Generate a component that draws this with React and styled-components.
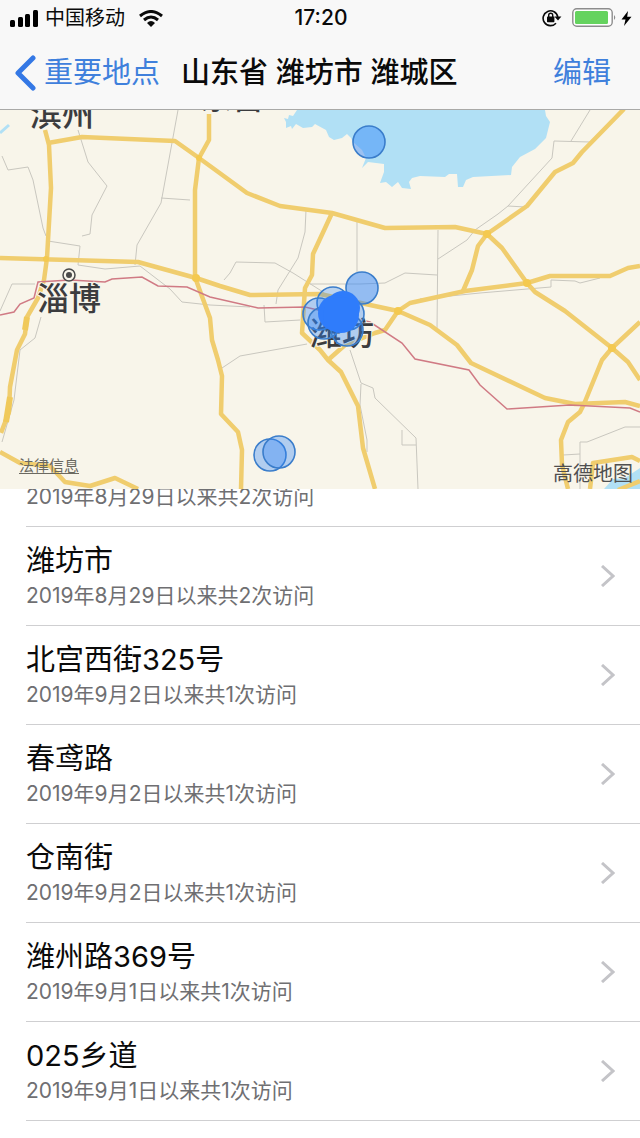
import React from 'react';
import styled, { createGlobalStyle } from 'styled-components';

const GlobalStyle = createGlobalStyle`
  * {
    box-sizing: border-box;
  }

  body {
    margin: 0;
    background-color: #ffffff;
    color: #0a0a0a;
    font-family: Inter, "Noto Sans CJK SC", sans-serif;
  }
`

const Page = styled.div`
  display: flex;
  flex-direction: column;
  min-height: 100vh;
`

const Header = styled.header`
  background-color: #f8f8f8;
  border-bottom: 1px solid #a9a9a7;
`

const StatusBar = styled.div`
  display: grid;
  grid-template-columns: 1fr auto 1fr;
  align-items: center;
  height: 36px;
  padding: 0 8px 0 10px;
`

const StatusGroup = styled.div`
  display: flex;
  align-items: center;
  justify-content: ${props => props.$end ? 'flex-end' : 'flex-start'};
  gap: ${props => props.$gap};
`

const Carrier = styled.span`
  font-size: 20px;
  line-height: 28px;
  margin: 0 8px 0 0;
`

const Clock = styled.time`
  font-size: 21px;
  font-weight: 500;
  line-height: 28px;
`

const NavBar = styled.nav`
  display: flex;
  align-items: center;
  height: 73px;
  padding: 0 29px 0 14px;
`

const NavButton = styled.button`
  display: flex;
  align-items: center;
  gap: 8px;
  padding: 0;
  border: 0;
  background: none;
  color: #3f80dc;
  font-family: inherit;
  font-size: 29px;
  line-height: 40px;
`

const Title = styled.h1`
  flex: 1;
  margin: 0 0 0 21px;
  font-size: 29px;
  font-weight: 500;
  line-height: 40px;
`

const MapArea = styled.section`
  position: relative;
  height: 379px;
  overflow: hidden;
  background-color: #f8f5ea;
`

const MapDrawing = styled.svg`
  display: block;
  width: 100%;
  height: 100%;

  text {
    font-family: "Noto Sans CJK SC", sans-serif;
    font-size: 32px;
    font-weight: 500;
    fill: #3c3c3e;
    stroke: #f8f5ea;
    stroke-width: 2px;
    paint-order: stroke;
  }
`

const LegalLink = styled.a`
  position: absolute;
  left: 19px;
  bottom: 12px;
  color: #6b6960;
  font-size: 15px;
  line-height: 22px;
  text-underline-offset: 2px;
`

const MapBrand = styled.span`
  position: absolute;
  right: 7px;
  bottom: 1px;
  color: #4f4f50;
  font-size: 20px;
  line-height: 28px;
`

const PlaceList = styled.ul`
  margin: 0;
  padding: 0 0 17px 26px;
  list-style: none;
`

const PlaceRow = styled.li`
  display: flex;
  align-items: flex-end;
  height: ${props => props.$scrolled ? '38px' : '99px'};
  overflow: hidden;
  border-bottom: 1px solid #cfcfd1;
`

const PlaceButton = styled.button`
  display: flex;
  align-items: center;
  justify-content: space-between;
  width: 100%;
  height: 98px;
  flex-shrink: 0;
  padding: 0 25px 0 0;
  border: 0;
  background: none;
  color: inherit;
  font-family: inherit;
  text-align: left;
`

const PlaceText = styled.span`
  display: flex;
  flex-direction: column;
`

const PlaceName = styled.span`
  font-size: 29px;
  line-height: 40px;
`

const PlaceVisits = styled.span`
  color: #6f6f72;
  font-size: 21px;
  line-height: 30px;
`

const places = [
  { name: '潍坊市', visits: '2019年8月29日以来共2次访问', scrolled: true },
  { name: '潍坊市', visits: '2019年8月29日以来共2次访问' },
  { name: '北宫西街325号', visits: '2019年9月2日以来共1次访问' },
  { name: '春鸢路', visits: '2019年9月2日以来共1次访问' },
  { name: '仓南街', visits: '2019年9月2日以来共1次访问' },
  { name: '潍州路369号', visits: '2019年9月1日以来共1次访问' },
  { name: '025乡道', visits: '2019年9月1日以来共1次访问' },
]

const minorRoads = [
  '2,156 8,170 28,167 33,180 43,228 46,236',
  '78,130 88,162 107,186 92,215 90,234 82,236',
  '178,110 161,203 137,245 135,265',
  '161,198 190,200',
  '48,241 80,246 78,265 105,269 140,266 170,289 182,302 210,305 250,307',
  '0,311 12,284 35,284',
  '41,317 35,338 20,350 14,400 2,442',
  '306,210 305,232 298,258 278,290 276,304',
  '224,280 230,273 236,262 275,263 293,273 320,290 340,305',
  '310,284 360,284 385,283 405,273 437,275',
  '357,222 357,272',
  '438,230 437,330',
  '438,259 467,240 475,230 498,214 508,206 552,158 554,141 590,142',
  '571,141 590,110',
  '508,206 525,207',
  '420,299 480,293 551,287 551,280 575,281 580,283 600,278',
  '264,305 265,322 300,320',
  '222,368 240,356 307,344',
  '350,350 361,383 373,388 375,398 416,438 418,489',
  '402,430 402,445 416,445',
  '361,384 360,405 367,440 367,452',
  '640,427 625,427 587,442 580,442 580,489',
  '563,455 580,454',
]

const mainRoads = [
  '45,130 49,145 51,188 47,258 44,280 38,298 27,317 25,334 17,350 10,387 9,412 1,433',
  '48,143 82,137 175,141 199,158 210,166 247,193 280,206 332,213 385,228 455,227 487,234 502,248 527,283 535,292 565,311 612,348 628,362 640,380',
  '209,114 209,140 199,158 195,190 195,277 200,291 210,318 212,340 218,360 222,376 221,414 238,432 242,450 241,489',
  '0,258 138,262 196,278 220,286 250,295 320,294 370,305 398,311 430,325 457,345 471,363 545,398 575,404 625,402 640,406',
  '332,213 313,254 312,275 305,288 302,333 320,350 328,360 341,372 358,406 363,448 375,489',
  '328,360 345,345 375,333 385,330 398,311 410,303 465,291 527,283 550,276 610,276 628,268 640,266',
  '463,291 472,270 478,246 487,234 527,206 555,172 573,163 582,152 624,109',
  '640,322 612,348 602,360 584,404 580,412 568,422 561,440 562,465 568,489',
  '0,452 20,463 50,466 65,482 90,486 115,478 138,489',
  '590,489 593,463 632,457 640,461',
  '618,490 640,481',
]

const visitDots = [
  { x: 369, y: 142, o: 0.45 },
  { x: 362, y: 288, o: 0.5 },
  { x: 333, y: 303, o: 0.3 },
  { x: 319, y: 314, o: 0.35 },
  { x: 324, y: 323, o: 0.35 },
  { x: 348, y: 314, o: 0.35 },
  { x: 347, y: 330, o: 0.35 },
  { x: 270, y: 455, o: 0.35 },
  { x: 279, y: 452, o: 0.35 },
]

function SignalIcon() {
  return (
    <svg width="29" height="17" viewBox="0 0 29 17">
      <rect x="0" y="10" width="5" height="7" rx="1.5" />
      <rect x="8" y="7" width="5" height="10" rx="1.5" />
      <rect x="15" y="4" width="5" height="13" rx="1.5" />
      <rect x="23" y="0" width="5" height="17" rx="1.5" />
    </svg>
  )
}

function WifiIcon() {
  return (
    <svg width="24" height="17" viewBox="0 0 24 17" fill="none" stroke="#0a0a0a" strokeWidth="3">
      <path d="M1 6 Q12 -3 23 6" />
      <path d="M5 10 Q12 4 19 10" />
      <path d="M8 13 Q12 9 16 13 L12 17 Z" fill="#0a0a0a" stroke="none" />
    </svg>
  )
}

function LockIcon() {
  return (
    <svg width="20" height="18" viewBox="0 0 20 18" fill="none" stroke="#0a0a0a" strokeWidth="1.6">
      <path d="M14 14.2 A7.4 7.4 0 1 1 15.8 8" />
      <path d="M12.4 7.5 L19.4 7.5 L16 11.5 Z" fill="#0a0a0a" stroke="none" />
      <rect x="5" y="7.6" width="7.4" height="5.6" rx="0.6" fill="#0a0a0a" stroke="none" />
      <path d="M6.7 8 V6.2 A2 2 0 0 1 10.7 6.2 V8" strokeWidth="1.4" />
    </svg>
  )
}

function BatteryIcon() {
  return (
    <svg width="45" height="20" viewBox="0 0 45 20">
      <rect x="0.8" y="0.8" width="39.4" height="17.4" rx="4" fill="#fff" stroke="#8c8c8c" strokeWidth="1.4" />
      <rect x="3" y="3" width="33" height="13" rx="1.5" fill="#65d35f" />
      <path d="M42 7 Q44.5 9.5 42 12 Z" fill="#8c8c8c" />
    </svg>
  )
}

function BoltIcon() {
  return (
    <svg width="11" height="15" viewBox="0 0 11 15">
      <path d="M7 0 L0.5 8.5 H4.5 L3 15 L10.5 5.8 H6.2 Z" />
    </svg>
  )
}

function CityMap() {
  return (
    <MapDrawing viewBox="0 110 640 379" preserveAspectRatio="xMidYMid slice">
      <g fill="#b1e0f5">
        <path d="M297 110 L293 116 L289 115 L288 119 L284 118 L286 122 L286 128 L291 126 L292 129 L296 124 L303 128 L312 127 L315 124 L326 130 L329 137 L334 140 L342 138 L347 134 L351 138 L353 142 L362 150 L366 158 L362 168 L368 162 L384 164 L384 172 L380 183 L386 182 L392 187 L398 182 L402 188 L411 189 L409 182 L412 178 L420 176 L445 177 L449 174 L457 174 L458 187 L463 187 L466 180 L473 177 L511 175 L512 167 L520 157 L535 149 L546 138 L550 122 L546 116 L545 110 Z" />
        <path d="M604 489 L613 479 L625 478 L640 468 V489 Z" />
      </g>
      <path d="M0 133 L9 125" stroke="#b1e0f5" strokeWidth="3" />
      <g fill="none" stroke="#c9c7bf" strokeWidth="1">
        {minorRoads.map(points => <polyline key={points} points={points} />)}
      </g>
      <g fill="none" stroke="#f0cd6e" strokeWidth="4.5" strokeLinejoin="round">
        {mainRoads.map(points => <polyline key={points} points={points} />)}
      </g>
      <path d="M27 317 L25 330 M10 397 L6 422" stroke="#f0c95a" strokeWidth="6" />
      <g fill="#f4c94f">
        <circle cx="46" cy="259" r="3" />
        <circle cx="196" cy="278" r="4" />
        <circle cx="199" cy="158" r="3" />
        <circle cx="487" cy="234" r="4" />
        <circle cx="527" cy="283" r="4" />
        <circle cx="612" cy="348" r="4" />
        <circle cx="398" cy="311" r="4" />
      </g>
      <polyline
        points="0,315 14,312 20,304 34,298 38,282 70,280 105,282 112,279 142,277 158,286 187,287 210,297 258,308 305,307 370,322 402,343 415,359 469,370 480,385 507,409 570,405 630,408 640,412"
        fill="none" stroke="#d07a84" strokeWidth="1.5"
      />
      <circle cx="69" cy="275" r="6" fill="#f8f5ea" stroke="#4a4a4a" strokeWidth="1.5" />
      <circle cx="69" cy="275" r="3" fill="#4a4a4a" />
      <text x="30" y="126">滨州</text>
      <text x="200" y="109">东营</text>
      <text x="37" y="310">淄博</text>
      <text x="310" y="345">潍坊</text>
      {visitDots.map(dot => (
        <circle
          key={`${dot.x}-${dot.y}`} cx={dot.x} cy={dot.y} r="16"
          fill="#2d83fa" fillOpacity={dot.o} stroke="#3a7dcb" strokeWidth="1.6"
        />
      ))}
      <g fill="#2f7cfb">
        <circle cx="343" cy="308" r="17" />
        <circle cx="336" cy="313" r="18" />
        <circle cx="341" cy="315" r="18" />
      </g>
    </MapDrawing>
  )
}

export default function App() {
  return (
    <Page>
      <GlobalStyle />
      <Header>
        <StatusBar>
          <StatusGroup $gap="6px">
            <SignalIcon />
            <Carrier>中国移动</Carrier>
            <WifiIcon />
          </StatusGroup>
          <Clock>17:20</Clock>
          <StatusGroup $end $gap="10px">
            <LockIcon />
            <StatusGroup $gap="4px">
              <BatteryIcon />
              <BoltIcon />
            </StatusGroup>
          </StatusGroup>
        </StatusBar>
        <NavBar>
          <NavButton>
            <svg width="22" height="36" viewBox="0 0 22 36" fill="none" stroke="#3478e5" strokeWidth="5" strokeLinecap="round" strokeLinejoin="round">
              <path d="M19 3 L4 18 L19 33" />
            </svg>
            重要地点
          </NavButton>
          <Title>山东省 潍坊市 潍城区</Title>
          <NavButton>编辑</NavButton>
        </NavBar>
      </Header>
      <MapArea>
        <CityMap />
        <LegalLink href="#legal">法律信息</LegalLink>
        <MapBrand>高德地图</MapBrand>
      </MapArea>
      <PlaceList>
        {places.map((place, i) => (
          <PlaceRow key={i} $scrolled={place.scrolled}>
            <PlaceButton>
              <PlaceText>
                <PlaceName>{place.name}</PlaceName>
                <PlaceVisits>{place.visits}</PlaceVisits>
              </PlaceText>
              <svg width="14" height="22" viewBox="0 0 14 22" fill="none" stroke="#c4c4c8" strokeWidth="3">
                <path d="M1 1 L12 11 L1 21" />
              </svg>
            </PlaceButton>
          </PlaceRow>
        ))}
      </PlaceList>
    </Page>
  )
}
